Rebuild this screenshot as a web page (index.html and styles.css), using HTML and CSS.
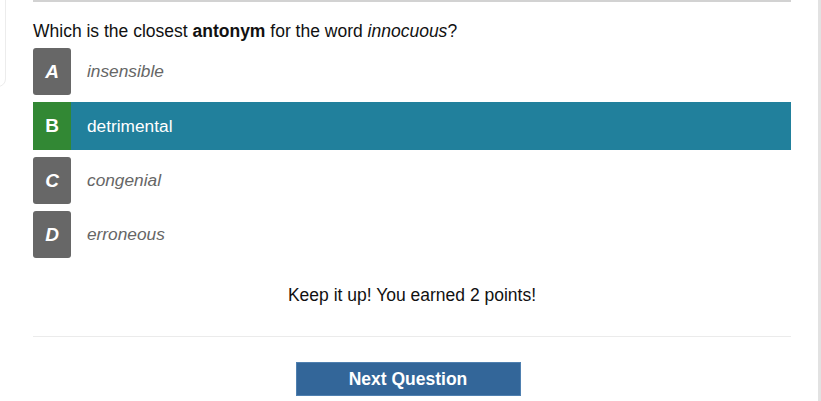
FILE: index.html
```html
<!DOCTYPE html>
<html>
<head>
<meta charset="utf-8">
<link rel="stylesheet" href="styles.css">
</head>
<body>
<div class="edge-left"></div>
<div class="page">
  <div class="quiz">
    <p class="question">Which is the closest <b>antonym</b> for the word <i>innocuous</i>?</p>
    <div class="options">
      <div class="option"><span class="letter">A</span><span class="text">insensible</span></div>
      <div class="option correct"><span class="letter">B</span><span class="text">detrimental</span></div>
      <div class="option"><span class="letter">C</span><span class="text">congenial</span></div>
      <div class="option"><span class="letter">D</span><span class="text">erroneous</span></div>
    </div>
    <p class="feedback">Keep it up! You earned 2 points!</p>
    <hr class="divider">
    <div class="actions"><button class="next">Next Question</button></div>
  </div>
  <div class="scrollbar"></div>
</div>
</body>
</html>
```
FILE: styles.css
```css
html, body {
  margin: 0;
  padding: 0;
  background: #fff;
  height: 100%;
  overflow: hidden;
}
body {
  font-family: "Liberation Sans", Arial, sans-serif;
  color: #111;
}
.edge-left {
  position: absolute;
  left: -10px;
  top: -10px;
  width: 14px;
  height: 95px;
  border: 1px solid #ececec;
  border-radius: 8px;
}
.page {
  display: flex;
  height: 401px;
}
.quiz {
  margin-left: 33px;
  width: 758px;
  border-top: 2px solid #d2d2d2;
}
.scrollbar {
  margin-left: auto;
  width: 3px;
  background: #e2e2e2;
}
.question {
  margin: 19px 0 0 0;
  font-size: 17.5px;
  line-height: 20px;
}
.question i { font-style: italic; }
.options {
  display: flex;
  flex-direction: column;
  gap: 7px;
  margin-top: 7px;
}
.option {
  display: flex;
  align-items: center;
  height: 47px;
}
.letter {
  width: 38px;
  height: 47px;
  background: #676767;
  border-radius: 3px;
  color: #fff;
  font-weight: bold;
  font-style: italic;
  font-size: 19px;
  display: flex;
  align-items: center;
  justify-content: center;
}
.text {
  margin-left: 16px;
  font-size: 17.3px;
  font-style: italic;
  color: #666;
}
.option.correct {
  background: #21809c;
  height: 48px;
}
.option.correct .letter {
  background: #328834;
  border-radius: 0;
  font-style: normal;
  height: 48px;
}
.option.correct .text {
  color: #fff;
  font-style: normal;
}
.feedback {
  text-align: center;
  margin: 27px 0 0 0;
  font-size: 17.5px;
  line-height: 20px;
}
.divider {
  border: 0;
  border-top: 1px solid #ebebeb;
  margin: 31px 0 0 0;
}
.actions {
  display: flex;
  justify-content: center;
  margin-top: 25px;
}
.next {
  width: 225px;
  height: 34px;
  margin-right: 8px;
  background: #336699;
  color: #fff;
  border: 1px solid #4f80b0;
  font-family: "Liberation Sans", Arial, sans-serif;
  font-weight: bold;
  font-size: 17.5px;
  padding: 0;
}
```
